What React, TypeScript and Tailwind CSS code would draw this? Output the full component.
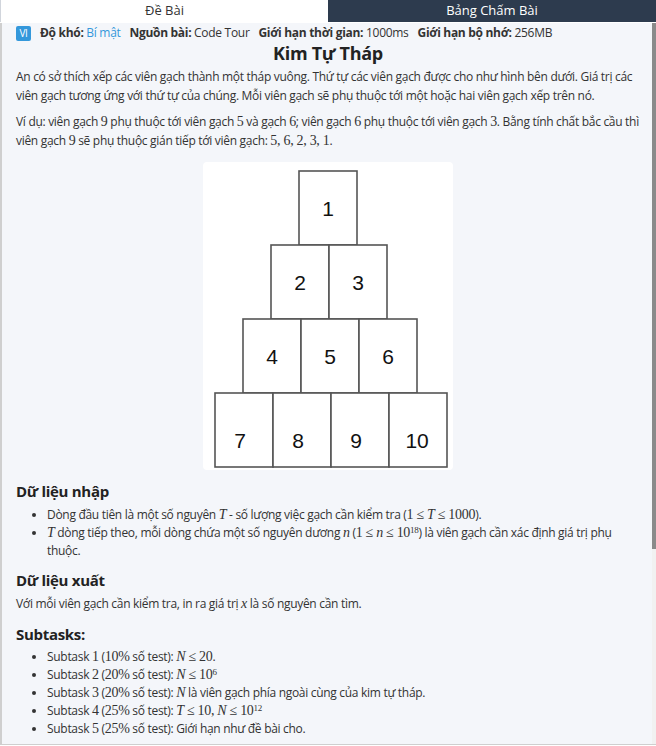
import React from 'react';

const M: React.FC<{ children: React.ReactNode; i?: boolean }> = ({ children, i }) => (
  <span className={`font-['Liberation_Serif',serif] text-[14px] leading-none ${i ? 'italic' : ''}`}>{children}</span>
);

const Pyramid: React.FC = () => {
  const w = 58;
  const h = 74;
  const rows = [
    { x: 96, y: 9, n: [1] },
    { x: 68, y: 83, n: [2, 3] },
    { x: 40, y: 157, n: [4, 5, 6] },
    { x: 12, y: 231, n: [7, 8, 9, 10] },
  ];
  return (
    <svg width="250" height="308" viewBox="0 0 250 308" className="block">
      {rows.map((r) =>
        r.n.map((n, k) => (
          <g key={n}>
            <rect x={r.x + k * w} y={r.y} width={w} height={h} fill="white" stroke="#555" strokeWidth="1.6" />
            <text
              x={r.x + k * w + w / 2 - (r.y > 200 ? 4 : 0) + (n === 10 ? 3 : 0)}
              y={r.y + h / 2 + 8 + (r.y > 200 ? 10 : 0)}
              textAnchor="middle"
              fontFamily="'Liberation Sans', Arial, sans-serif"
              fontSize="21"
              fill="#111"
            >
              {n}
            </text>
          </g>
        ))
      )}
    </svg>
  );
};

const App: React.FC = () => {
  return (
    <div className="w-[656px] h-[746px] bg-white font-['Open_Sans',sans-serif] text-[#333] overflow-hidden">
      <div className="flex h-[22px] text-[13px]">
        <div className="w-1/2 flex items-center justify-center bg-white text-[#333] border-l border-gray-300">Đề Bài</div>
        <div className="w-1/2 flex items-center justify-center bg-[#2d3b4e] text-white">Bảng Chấm Bài</div>
      </div>
      <div className="relative h-[722px] bg-[#f4f6fa] border-l-2 border-b border-[#cfcfcf] pl-[14px] pr-4 text-[12px] tracking-[-0.3px]">
        <div className="flex items-center h-[20px] mt-[1px] text-[12px] gap-[9px]">
          <span className="bg-[#3498db] text-white text-[10px] w-[15px] h-[15px] flex items-center justify-center rounded-[2px]">VI</span>
          <span><b>Độ khó:</b> <span className="text-[#3498db]">Bí mật</span></span>
          <span><b>Nguồn bài:</b> Code Tour</span>
          <span><b>Giới hạn thời gian:</b> 1000ms</span>
          <span><b>Giới hạn bộ nhớ:</b> 256MB</span>
        </div>
        <h1 className="text-center text-[18px] font-bold leading-[20px] text-[#222]">Kim Tự Tháp</h1>
        <p className="mt-[4px] leading-[19px]">
          An có sở thích xếp các viên gạch thành một tháp vuông. Thứ tự các viên gạch được cho như hình bên dưới. Giá trị các viên gạch tương ứng với thứ tự của chúng. Mỗi viên gạch sẽ phụ thuộc tới một hoặc hai viên gạch xếp trên nó.
        </p>
        <p className="mt-[7px] leading-[19px]">
          Ví dụ: viên gạch <M>9</M> phụ thuộc tới viên gạch <M>5</M> và gạch <M>6</M>; viên gạch <M>6</M> phụ thuộc tới viên gạch <M>3</M>. Bằng tính chất bắc cầu thì viên gạch <M>9</M> sẽ phụ thuộc gián tiếp tới viên gạch: <M>5, 6, 2, 3, 1</M>.
        </p>
        <div className="flex justify-center mt-[12px]">
          <div className="bg-white rounded-[4px]">
            <Pyramid />
          </div>
        </div>
        <h2 className="mt-[11px] text-[15px] font-bold text-[#222] leading-[20px]">Dữ liệu nhập</h2>
        <ul className="list-disc pl-[31px] mt-[5px] leading-[18px]">
          <li>Dòng đầu tiên là một số nguyên <M i>T</M> - số lượng việc gạch cần kiểm tra (<M>1 ≤ <i>T</i> ≤ 1000</M>).</li>
          <li>
            <M i>T</M> dòng tiếp theo, mỗi dòng chứa một số nguyên dương <M i>n</M> (<M>1 ≤ <i>n</i> ≤ 10<sup className="text-[9px]">18</sup></M>) là viên gạch cần xác định giá trị phụ thuộc.
          </li>
        </ul>
        <h2 className="mt-[10px] text-[15px] font-bold text-[#222] leading-[20px]">Dữ liệu xuất</h2>
        <p className="mt-[5px] leading-[18px]">
          Với mỗi viên gạch cần kiểm tra, in ra giá trị <M i>x</M> là số nguyên cần tìm.
        </p>
        <h2 className="mt-[11px] text-[15px] font-bold text-[#222] leading-[20px]">Subtasks:</h2>
        <ul className="list-disc pl-[31px] mt-[4px] leading-[18px]">
          <li>Subtask <M>1</M> (<M>10%</M> số test): <M><i>N</i> ≤ 20</M>.</li>
          <li>Subtask <M>2</M> (<M>20%</M> số test): <M><i>N</i> ≤ 10<sup className="text-[9px]">6</sup></M></li>
          <li>Subtask <M>3</M> (<M>20%</M> số test): <M i>N</M> là viên gạch phía ngoài cùng của kim tự tháp.</li>
          <li>Subtask <M>4</M> (<M>25%</M> số test): <M><i>T</i> ≤ 10, <i>N</i> ≤ 10<sup className="text-[9px]">12</sup></M></li>
          <li>Subtask <M>5</M> (<M>25%</M> số test): Giới hạn như đề bài cho.</li>
        </ul>
        <div className="absolute right-0 top-0 bottom-0 w-[4px] bg-[#f1f1f1]">
          <div className="h-[526px] bg-[#8a8a8a]" />
        </div>
      </div>
    </div>
  );
};

export default App;
